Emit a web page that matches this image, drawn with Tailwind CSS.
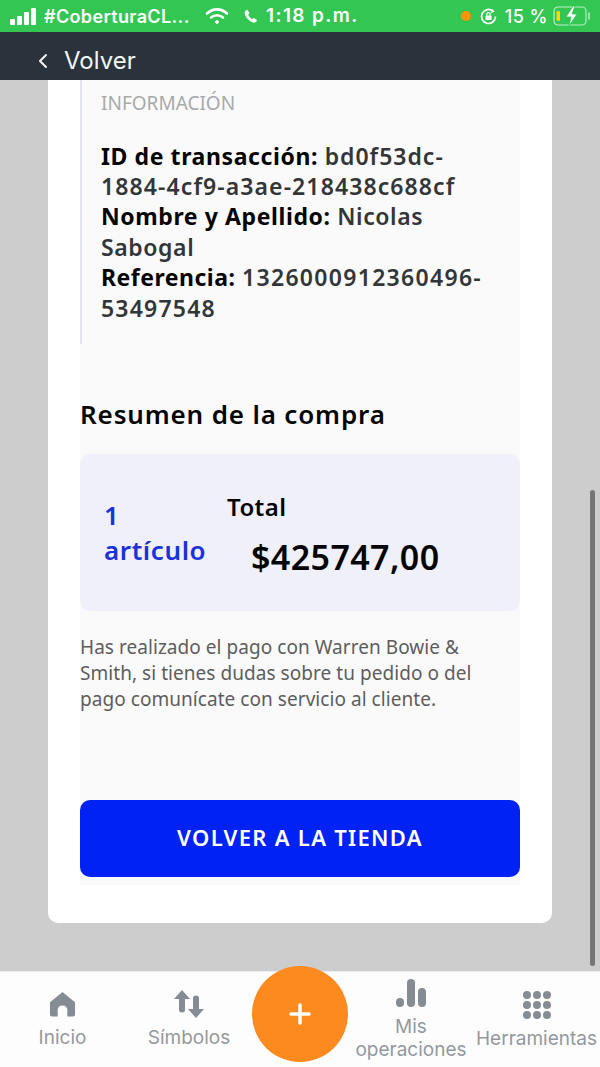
<!DOCTYPE html>
<html lang="es">
<head>
    <meta charset="UTF-8">
    <meta name="viewport" content="width=device-width, initial-scale=1.0">
    <title>Volver</title>
    <script src="https://cdn.jsdelivr.net/npm/@tailwindcss/browser@4"></script>
</head>
<body class="bg-[#cdcdcd] font-['Noto_Sans',sans-serif]">
<div class="w-[600px] h-[1067px] flex flex-col overflow-hidden relative">
    <!-- Status bar -->
    <div class="h-8 shrink-0 bg-[#33c653] text-white flex items-center pl-[10px] pr-[9px] font-['Inter',sans-serif] font-semibold text-[18px]">
        <svg width="27" height="17" viewBox="0 0 27 17" fill="#fff"><rect x="0" y="11" width="5" height="6" rx="1"/><rect x="7" y="8" width="5" height="9" rx="1"/><rect x="14" y="4" width="5" height="13" rx="1"/><rect x="21" y="0" width="5" height="17" rx="1"/></svg>
        <span class="ml-[7px] w-[161px] whitespace-nowrap tracking-[0.35px]">#CoberturaCL...</span>
        <svg width="24" height="18" viewBox="0 0 24 18" fill="none" stroke="#fff" stroke-width="2.6" stroke-linecap="round"><path d="M2 6.500C8 1 16 1 22 6.500"/><path d="M6 10.500C9.500 7.500 14.500 7.500 18 10.500"/><circle cx="12" cy="15" r="1.400" fill="#fff" stroke-width="1"/></svg>
        <svg class="ml-[14px]" width="15" height="15" viewBox="0 0 24 24" fill="#fff"><path d="M6.600 1.500c-1 .1-2.900 1.400-3.600 2.700-1.200 2.300.3 6.800 4 11 3.800 4.200 8 6.900 10.700 6.600 1.800-.2 3.700-1.800 4.400-3.200.3-.6.100-1.100-.4-1.500l-3.600-2.500c-.6-.4-1.200-.3-1.700.2l-1.300 1.500c-2.300-.9-5.700-4.300-6.900-7.400l1.600-1.300c.5-.4.600-1 .3-1.600L8 2.200c-.3-.5-.8-.8-1.400-.7z"/></svg>
        <span class="ml-[8px] whitespace-nowrap text-[19px] tracking-[1.400px]">1:18 p.m.</span>
        <span class="ml-auto w-[10px] h-[10px] rounded-full bg-[#ff9500]"></span>
        <svg class="ml-[8px]" width="19" height="19" viewBox="0 0 19 19" fill="none" stroke="#fff" stroke-width="1.700"><path d="M16.500 9.500a7 7 0 1 1-2.400-5.300"/><path d="M12.500 2.500l2 2-2.400 1" stroke-width="1.300"/><rect x="6.500" y="8.500" width="6" height="4.500" rx=".6" fill="#fff" stroke="none"/><path d="M7.800 8.500V7.300a1.700 1.700 0 0 1 3.400 0v1.200" stroke-width="1.200"/></svg>
        <span class="ml-[7px] whitespace-nowrap font-medium tracking-[0.5px]">15 %</span>
        <svg class="ml-[5px]" width="38" height="22" viewBox="0 0 38 22" fill="none"><rect x="1" y="2" width="32" height="18" rx="4" stroke="#b9efc6" stroke-width="1.200"/><rect x="3.500" y="6" width="3.500" height="10" rx="1.200" fill="#ffd60a"/><path d="M20 1l-7 11h5l-2 9 8-12h-5l3-8z" fill="#fff" stroke="#33c653" stroke-width=".8"/><path d="M36 8v6" stroke="#b9efc6" stroke-width="1.500" stroke-linecap="round"/></svg>
    </div>

    <!-- Header -->
    <div class="h-12 shrink-0 bg-[#2a333b] text-[#f4f5f6] flex items-center pl-[37px] pt-[10px] font-['Inter',sans-serif] text-[24px]">
        <svg width="11" height="16" viewBox="0 0 11 16" fill="none" stroke="#f4f5f6" stroke-width="2" stroke-linecap="round" stroke-linejoin="round"><path d="M9 2L3 8l6 6"/></svg>
        <span class="ml-[16px]">Volver</span>
    </div>

    <!-- Scrolled content -->
    <div class="flex-1 min-h-0 relative">
        <div class="mx-12 h-[843px] bg-white rounded-b-[10px] px-8">
            <div class="h-[805px] bg-[#fafafa] flex flex-col">
                <div class="h-[264px] border-l-2 border-[#e2e3f0] pl-[19px] pt-[10px]">
                    <p class="text-[19px] leading-[26px] text-[#a8a9ab]">INFORMACIÓN</p>
                    <div class="mt-[24.500px] text-[23px] leading-[30.400px] font-semibold text-[#333638] tracking-[0.6px] whitespace-nowrap">
                        <p><span class="font-bold text-[#050505]">ID de transacción:</span> <span class="tracking-[1px]">bd0f53dc-</span></p>
                        <p class="tracking-[1.100px]">1884-4cf9-a3ae-218438c688cf</p>
                        <p><span class="font-bold text-[#050505]">Nombre y Apellido:</span> Nicolas</p>
                        <p>Sabogal</p>
                        <p><span class="font-bold text-[#050505] tracking-[0.5px]">Referencia:</span> <span class="tracking-[1.300px]">1326000912360496-</span></p>
                        <p class="tracking-[1.200px]">53497548</p>
                    </div>
                </div>
                <h2 class="mt-[52px] text-[26px] leading-[36px] font-semibold tracking-[0.85px] text-[#050505]">Resumen de la compra</h2>
                <div class="mt-[22px] h-[157px] rounded-[10px] bg-[#f0f0fb] flex pl-6">
                    <div class="w-[123px] pt-[44px] text-[26px] leading-[35px] font-semibold tracking-[0.6px] text-[#1a33d6]">1<br>artículo</div>
                    <div class="pt-[36.500px]">
                        <p class="text-[24px] leading-[32px] font-semibold tracking-[0.4px] text-[#050505]">Total</p>
                        <p class="mt-[12.500px] ml-[24px] text-[34px] leading-[44px] font-semibold tracking-[0.4px] text-[#050505]">$425747,00</p>
                    </div>
                </div>
                <div class="mt-[23px] text-[19px] leading-[26px] tracking-[0.05px] text-[#5d5d5d] whitespace-nowrap">
                    <p>Has realizado el pago con Warren Bowie &amp;</p>
                    <p>Smith, si tienes dudas sobre tu pedido o del</p>
                    <p>pago comunícate con servicio al cliente.</p>
                </div>
                <button class="mt-[88px] h-[77px] pb-[3px] rounded-[10px] bg-[#0022f5] text-white text-[22px] font-semibold tracking-[1.300px]">VOLVER A LA TIENDA</button>
            </div>
        </div>
        <!-- Scrollbar -->
        <div class="absolute left-[590px] top-[410px] w-[5px] h-[476px] rounded-full bg-[#767676]"></div>
    </div>

    <!-- Bottom nav -->
    <div class="h-[96px] shrink-0 bg-[#fdfdfd] border-t border-[#eeeeee] relative flex text-[#94989e] font-['Inter',sans-serif] text-[19px] leading-[23px]">
        <div class="w-[125px] flex flex-col items-center pt-[18px]">
            <svg width="27" height="28" viewBox="0 0 28 28" fill="#868c94"><path d="M14 1.500L2 11.500c-.6.500-1 1-1 2V25c0 1.200.8 2 2 2h6v-7c0-2.500 2-4.500 5-4.500s5 2 5 4.500v7h6c1.200 0 2-.8 2-2V13.500c0-1-.4-1.500-1-2z"/></svg>
            <span class="mt-[8px]">Inicio</span>
        </div>
        <div class="w-[128px] flex flex-col items-center pt-[18px]">
            <svg width="30" height="28" viewBox="0 0 30 28" fill="#868c94"><path d="M8 0L0 9h5v11c0 1.500 1 2.500 3 2.500s3-1 3-2.500V9h5z"/><path d="M22 28l8-9h-5V8c0-1.500-1-2.500-3-2.500s-3 1-3 2.500v11h-5z"/></svg>
            <span class="mt-[8px]">Símbolos</span>
        </div>
        <div class="w-[94px]"></div>
        <div class="w-[128px] flex flex-col items-center pt-[7px]">
            <svg width="30" height="28" viewBox="0 0 30 28" fill="#868c94"><rect x="0" y="19" width="8" height="9" rx="4"/><rect x="11" y="0" width="8" height="28" rx="4"/><rect x="22" y="9" width="8" height="19" rx="4"/></svg>
            <span class="mt-[8px] text-center">Mis<br>operaciones</span>
        </div>
        <div class="flex-1 flex flex-col items-center pt-[19px] whitespace-nowrap -ml-[2px]">
            <div class="grid grid-cols-3 gap-x-[2px] gap-y-[2px] w-[28px]">
                <span class="w-2 h-2 rounded-full bg-[#868c94]"></span><span class="w-2 h-2 rounded-full bg-[#868c94]"></span><span class="w-2 h-2 rounded-full bg-[#868c94]"></span>
                <span class="w-2 h-2 rounded-full bg-[#868c94]"></span><span class="w-2 h-2 rounded-full bg-[#868c94]"></span><span class="w-2 h-2 rounded-full bg-[#868c94]"></span>
                <span class="w-2 h-2 rounded-full bg-[#868c94]"></span><span class="w-2 h-2 rounded-full bg-[#868c94]"></span><span class="w-2 h-2 rounded-full bg-[#868c94]"></span>
            </div>
            <span class="mt-[8px]">Herramientas</span>
        </div>
        <!-- Add button -->
        <div class="absolute left-[252px] top-[-6px] w-24 h-24 rounded-full bg-[#fd8a1f] flex items-center justify-center">
            <svg width="22" height="22" viewBox="0 0 22 22" stroke="#fff" stroke-width="3.500" stroke-linecap="round"><path d="M11 2v18M2 11h18"/></svg>
        </div>
    </div>
</div>
</body>
</html>
